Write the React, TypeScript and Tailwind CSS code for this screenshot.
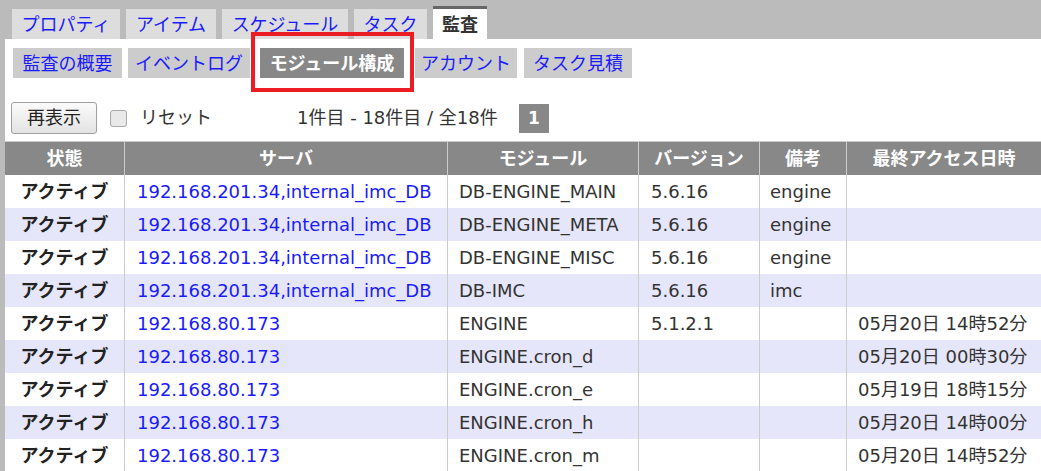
import React from "react";

const FONT = '"DejaVu Sans", "Noto Sans CJK JP", sans-serif';

const topTabs = [
  { label: "プロパティ", w: "w-[108px]" },
  { label: "アイテム", w: "w-[90px]" },
  { label: "スケジュール", w: "w-[126px]" },
  { label: "タスク", w: "w-[73px]" },
];

type Row = { server: string; module: string; version: string; note: string; last: string };

const rows: Row[] = [
  { server: "192.168.201.34,internal_imc_DB", module: "DB-ENGINE_MAIN", version: "5.6.16", note: "engine", last: "" },
  { server: "192.168.201.34,internal_imc_DB", module: "DB-ENGINE_META", version: "5.6.16", note: "engine", last: "" },
  { server: "192.168.201.34,internal_imc_DB", module: "DB-ENGINE_MISC", version: "5.6.16", note: "engine", last: "" },
  { server: "192.168.201.34,internal_imc_DB", module: "DB-IMC", version: "5.6.16", note: "imc", last: "" },
  { server: "192.168.80.173", module: "ENGINE", version: "5.1.2.1", note: "", last: "05月20日 14時52分" },
  { server: "192.168.80.173", module: "ENGINE.cron_d", version: "", note: "", last: "05月20日 00時30分" },
  { server: "192.168.80.173", module: "ENGINE.cron_e", version: "", note: "", last: "05月19日 18時15分" },
  { server: "192.168.80.173", module: "ENGINE.cron_h", version: "", note: "", last: "05月20日 14時00分" },
  { server: "192.168.80.173", module: "ENGINE.cron_m", version: "", note: "", last: "05月20日 14時52分" },
];

const headers = ["状態", "サーバ", "モジュール", "バージョン", "備考", "最終アクセス日時"];

export default function App() {
  return (
    <div
      className="relative w-[1041px] h-[471px] overflow-hidden bg-[#bbbbbb]"
      style={{ fontFamily: FONT }}
    >
      {/* top tabs */}
      <div className="flex items-end h-[39px] pl-[12px] gap-[6px]">
        {topTabs.map((t) => (
          <div
            key={t.label}
            className={`${t.w} h-[30px] bg-[#dddddd] text-[#1a1aff] text-[18px] leading-[32px] text-center`}
          >
            {t.label}
          </div>
        ))}
        <div className="w-[54px] h-[33px] bg-white border-t-[3px] border-[#666666] text-[#333333] font-bold text-[18px] leading-[32px] text-center">
          監査
        </div>
      </div>

      {/* content */}
      <div className="ml-[5px] h-[432px] bg-white">
        {/* sub tabs */}
        <div className="flex pt-[9px] pl-[8px] h-[39px]">
          <div className="w-[109px] h-[30px] bg-[#cccccc] text-[#1a1aff] text-[18px] leading-[31px] text-center">
            監査の概要
          </div>
          <div className="ml-[6px] w-[122px] h-[30px] bg-[#cccccc] text-[#1a1aff] text-[18px] leading-[31px] text-center">
            イベントログ
          </div>
          <div className="ml-[10px] w-[144px] h-[30px] bg-[#888888] text-white font-bold text-[18px] leading-[31px] text-center">
            モジュール構成
          </div>
          <div className="ml-[11px] w-[102px] h-[30px] bg-[#cccccc] text-[#1a1aff] text-[18px] leading-[31px] text-center">
            アカウント
          </div>
          <div className="ml-[7px] w-[108px] h-[30px] bg-[#cccccc] text-[#1a1aff] text-[18px] leading-[31px] text-center">
            タスク見積
          </div>
        </div>

        {/* toolbar */}
        <div className="flex items-center h-[32px] mt-[24px] pl-[6px]">
          <div className="w-[86px] h-[32px] border border-[#a0a0a0] rounded-[3px] bg-gradient-to-b from-[#fbfbfb] to-[#e3e3e3] text-[#222222] text-[18px] leading-[30px] text-center">
            再表示
          </div>
          <div className="ml-[13px] w-[17px] h-[17px] border border-[#a8a8a8] rounded-[3px] bg-[#e9e9e9]" />
          <div className="ml-[13px] text-[#333333] text-[18px] leading-[30px]">リセット</div>
          <div className="ml-[85px] w-[222px] text-[#333333] text-[18px] leading-[30px] whitespace-nowrap">
            1件目 - 18件目 / 全18件
          </div>
          <div className="w-[30px] h-[29px] bg-[#888888] text-white font-bold text-[17px] leading-[29px] text-center">
            1
          </div>
        </div>

        {/* table */}
        <div className="mt-[7px] border-t border-[#cccccc]">
          <div className="grid grid-cols-[119px_323px_191px_121px_87px_195px] h-[33px] bg-[#888888] text-white font-bold text-[18px] leading-[33px] text-center">
            {headers.map((h, i) => (
              <div key={h} className={i === 0 ? "" : "border-l border-[#cccccc]"}>
                {h}
              </div>
            ))}
          </div>
          {rows.map((r, idx) => (
            <div
              key={idx}
              className={`grid grid-cols-[119px_323px_191px_121px_87px_195px] h-[33px] text-[18px] leading-[33px] text-[#333333] ${
                idx % 2 === 1 ? "bg-[#e6e6fa]" : "bg-white"
              }`}
            >
              <div className="text-center font-bold text-[#222222]">アクティブ</div>
              <div className="border-l border-[#cccccc] pl-[12px] text-[#1a1aff] whitespace-nowrap">{r.server}</div>
              <div className="border-l border-[#cccccc] pl-[11px] whitespace-nowrap">{r.module}</div>
              <div className="border-l border-[#cccccc] pl-[12px] whitespace-nowrap">{r.version}</div>
              <div className="border-l border-[#cccccc] pl-[10px] whitespace-nowrap">{r.note}</div>
              <div className="border-l border-[#cccccc] pl-[11px] whitespace-nowrap">{r.last}</div>
            </div>
          ))}
        </div>
      </div>

      {/* red highlight annotation */}
      <div className="absolute left-[251px] top-[32px] w-[163px] h-[60px] border-[4px] border-[#ec1c24]" />
    </div>
  );
}
